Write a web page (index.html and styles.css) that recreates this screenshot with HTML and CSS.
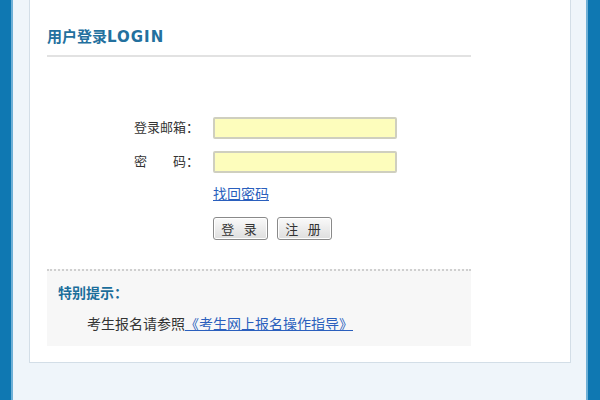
FILE: index.html
```html
<!DOCTYPE html>
<html lang="zh-CN">
<head>
    <meta charset="UTF-8">
    <title>用户登录</title>
    <link rel="stylesheet" href="styles.css">
</head>
<body>
    <div class="frame">
        <div class="panel">
            <!-- 标题 -->
            <h2 class="panel-title">用户登录<span class="en">LOGIN</span></h2>

            <!-- 登录表单 -->
            <form class="login-form">
                <div class="form-row">
                    <label class="form-label">登录邮箱：</label>
                    <input type="text" class="form-input">
                </div>
                <div class="form-row">
                    <label class="form-label">密　　码：</label>
                    <input type="password" class="form-input">
                </div>
                <div class="form-link">
                    <a href="#">找回密码</a>
                </div>
                <div class="form-actions">
                    <button type="button" class="btn">登 录</button>
                    <button type="button" class="btn">注 册</button>
                </div>
            </form>

            <!-- 特别提示 -->
            <div class="notice">
                <h3 class="notice-title">特别提示：</h3>
                <p class="notice-text">考生报名请参照<a href="#">《考生网上报名操作指导》</a></p>
            </div>
        </div>
    </div>
</body>
</html>
```

FILE: styles.css
```css
/* 全局 */
* {
    margin: 0;
    padding: 0;
    box-sizing: border-box;
}

body {
    background-color: #eff5fa;
    font-family: "Liberation Sans", "Noto Sans CJK SC", sans-serif;
    font-size: 13px;
    color: #333;
    height: 400px;
    overflow: hidden;
}

/* 外框 */
.frame {
    height: 400px;
    border-left: 11px solid #0f78b2;
    border-right: 12px solid #0f78b2;
    padding: 0 17px 0 17px;
    box-shadow: inset 2px 0 0 #6fb0d6, inset -2px 0 0 #6fb0d6;
}

.panel {
    height: 363px;
    margin-left: 1px;
    background-color: #fff;
    border: 1px solid #d3dee7;
    border-top: none;
    padding: 0 0 0 17px;
}

/* 标题 */
.panel-title {
    width: 424px;
    padding-top: 27px;
    padding-bottom: 8px;
    line-height: 20px;
    font-family: "DejaVu Sans", "Noto Sans CJK SC", sans-serif;
    font-size: 15px;
    font-weight: bold;
    color: #23709e;
    border-bottom: 2px solid #e2e2e2;
}

.panel-title .en {
    letter-spacing: 1px;
}

/* 表单 */
.login-form {
    margin-top: 60px;
    padding-left: 87px;
}

.form-row {
    display: flex;
    align-items: center;
    height: 22px;
    margin-bottom: 12px;
}

.form-label {
    width: 79px;
    color: #333;
    line-height: 22px;
}

.form-input {
    width: 184px;
    height: 22px;
    background-color: #fdfdbc;
    border: 2px solid #cfcfbf;
    border-radius: 2px;
    outline: none;
}

.form-link {
    margin-top: -1px;
    padding-left: 79px;
    line-height: 20px;
    font-size: 14px;
}

.form-link a {
    color: #2a5fbd;
    text-decoration: underline;
}

.form-actions {
    display: flex;
    gap: 9px;
    margin-top: 13px;
    padding-left: 79px;
}

.btn {
    width: 55px;
    height: 23px;
    font-family: "Liberation Sans", "Noto Sans CJK SC", sans-serif;
    font-size: 13px;
    color: #333;
    letter-spacing: 3px;
    background: linear-gradient(#fafafa, #dedede);
    border: 1px solid #8a8a8a;
    border-radius: 3px;
    box-shadow: inset 0 0 0 1px #fff;
}

/* 特别提示 */
.notice {
    width: 424px;
    margin-top: 29px;
    padding: 12px 0 12px 11px;
    background-color: #f7f7f7;
    border-top: 2px dotted #cfcfcf;
}

.notice-title {
    font-size: 14px;
    font-weight: bold;
    line-height: 20px;
    color: #1b6e9b;
}

.notice-text {
    margin-top: 11px;
    padding-left: 29px;
    line-height: 20px;
    font-size: 14px;
    color: #333;
}

.notice-text a {
    color: #2a5fbd;
    text-decoration: underline;
}
```
